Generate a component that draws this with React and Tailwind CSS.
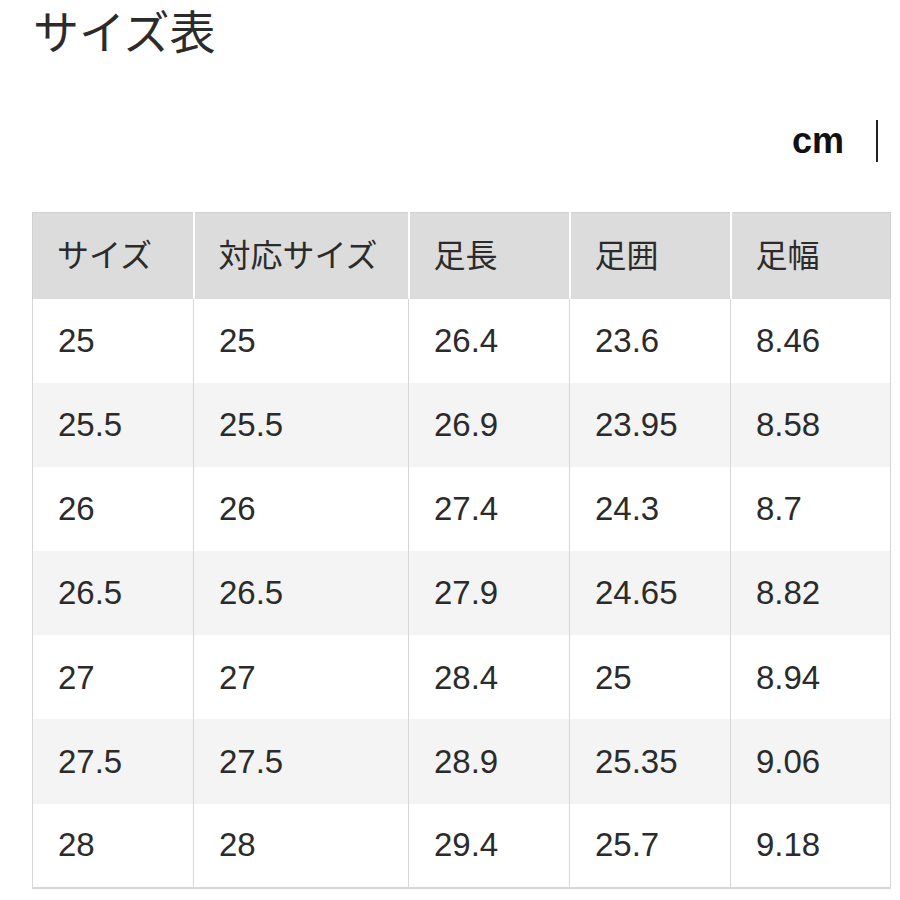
const headers = ['サイズ', '対応サイズ', '足長', '足囲', '足幅'];

const rows = [
  ['25', '25', '26.4', '23.6', '8.46'],
  ['25.5', '25.5', '26.9', '23.95', '8.58'],
  ['26', '26', '27.4', '24.3', '8.7'],
  ['26.5', '26.5', '27.9', '24.65', '8.82'],
  ['27', '27', '28.4', '25', '8.94'],
  ['27.5', '27.5', '28.9', '25.35', '9.06'],
  ['28', '28', '29.4', '25.7', '9.18'],
];

const widths = ['w-[161px]', 'w-[215px]', 'w-[161px]', 'w-[161px]', 'w-[160px]'];

export default function App() {
  return (
    <div
      className="w-[900px] h-[900px] bg-white text-[#2b2b2b] overflow-hidden"
      style={{ fontFamily: '"Liberation Sans", "Noto Sans CJK JP", sans-serif' }}
    >
      {/* Title */}
      <h1 className="pl-[33px] pt-[5px] text-[46px] leading-[56px] font-normal">サイズ表</h1>

      {/* Unit */}
      <div className="flex justify-end items-center h-[48px] mt-[56px] pr-[22px]">
        <span className="text-[36px] font-bold text-[#111] leading-none">cm</span>
        <span className="ml-[32px] w-[2px] h-[42px] bg-[#222]" />
      </div>

      {/* Table */}
      <div className="mt-[47px] ml-[32px] w-[859px]">
        <table className="border-collapse table-fixed w-full">
          <thead>
            <tr className="h-[86px]">
              {headers.map((h, i) => (
                <th
                  key={h}
                  className={`${widths[i]} bg-[#dcdcdc] text-left font-normal text-[32px] pl-[24px] border-[#d0d0d0] ${
                    i === 0 ? 'border-l' : 'border-l-2 border-l-white'
                  } ${i === 4 ? 'border-r' : ''} border-t`}
                >
                  {h}
                </th>
              ))}
            </tr>
          </thead>
          <tbody>
            {rows.map((r, ri) => (
              <tr key={ri} className={`h-[84.2px] ${ri % 2 === 1 ? 'bg-[#f4f4f4]' : 'bg-white'}`}>
                {r.map((c, ci) => (
                  <td
                    key={ci}
                    className={`text-[33px] pl-[25px] border-x border-[#d6d6d6] ${
                      ri === rows.length - 1 ? 'border-b-2' : ''
                    }`}
                  >
                    {c}
                  </td>
                ))}
              </tr>
            ))}
          </tbody>
        </table>
      </div>
    </div>
  );
}
